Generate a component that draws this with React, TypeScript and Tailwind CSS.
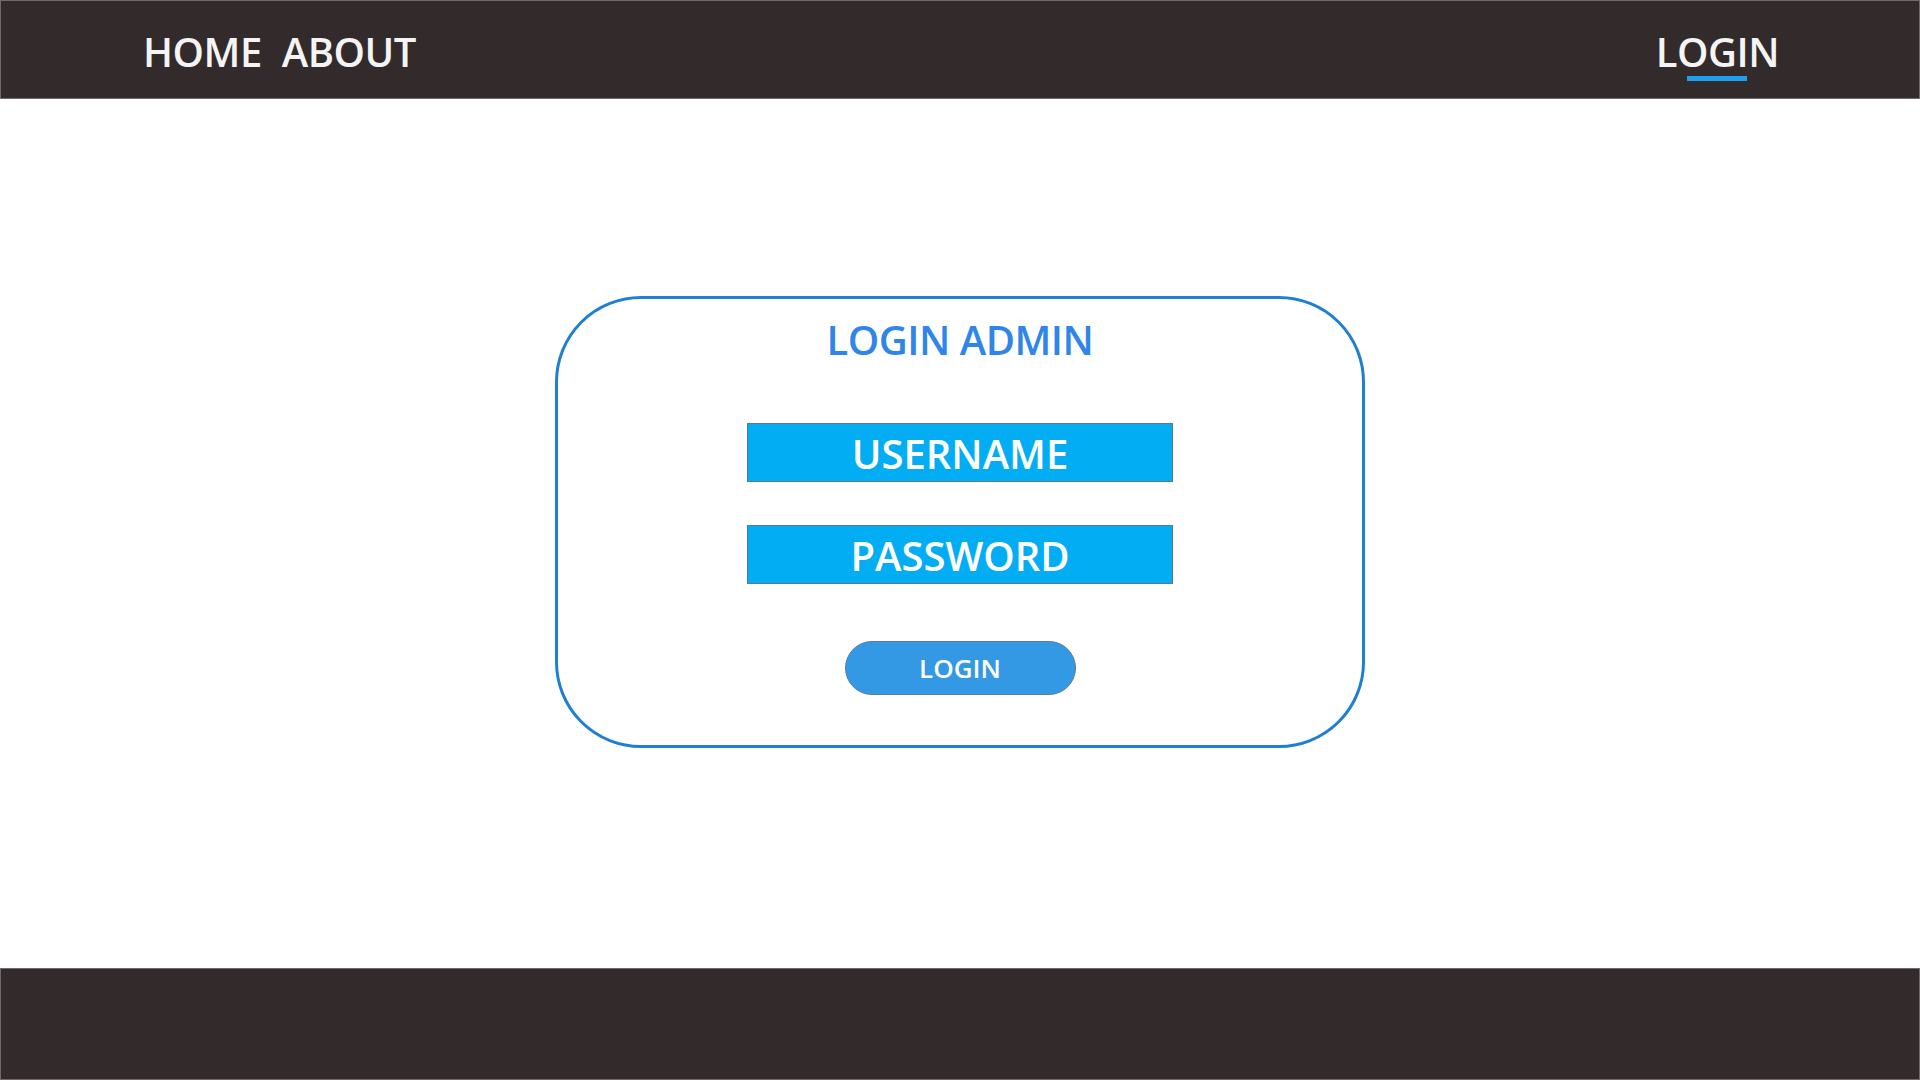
import React from 'react';

const font = { fontFamily: '"Open Sans", "Noto Sans", sans-serif' };

const Field: React.FC<{ label: string }> = ({ label }) => (
  <div className="w-[426px] h-[59px] bg-[#03adf4] border border-[#4f7d9b] flex items-center justify-center pt-[3px]">
    <span className="text-[40px] leading-none font-semibold text-white">{label}</span>
  </div>
);

const App: React.FC = () => {
  return (
    <div className="w-[1920px] h-[1080px] bg-white flex flex-col overflow-hidden" style={font}>
      {/* Top bar */}
      <header className="h-[99px] bg-[#322a2b] border border-[#6b6b6b] flex justify-between items-start pt-[27px] pl-[142px] pr-[140px]">
        <nav className="flex gap-[20px] text-[40px] leading-[48px] font-semibold tracking-[-0.5px] text-[#f4f4f4]">
          <span>HOME</span>
          <span>ABOUT</span>
        </nav>
        <div className="flex flex-col items-center">
          <span className="text-[40px] leading-[48px] font-semibold tracking-[-0.5px] text-[#f4f4f4]">LOGIN</span>
          <div className="w-[60px] h-[5px] bg-[#1ea0ef]" />
        </div>
      </header>

      {/* Login card */}
      <main className="flex-1 pt-[197px]">
        <div className="mx-auto w-[810px] h-[452px] border-[3px] border-[#1f7fd1] rounded-[86px] flex flex-col items-center pt-[17px]">
          <h1 className="text-[40px] leading-[48px] font-semibold tracking-[-0.5px] text-[#2f86e8]">LOGIN ADMIN</h1>
          <div className="mt-[59px] flex flex-col gap-[43px]">
            <Field label="USERNAME" />
            <Field label="PASSWORD" />
          </div>
          <button className="mt-[57px] w-[231px] h-[54px] rounded-full bg-[#3399e5] border border-[#5c7c99] text-white text-[26px] leading-none font-semibold">
            LOGIN
          </button>
        </div>
      </main>

      {/* Bottom bar */}
      <footer className="h-[112px] bg-[#322a2b] border border-[#6b6b6b]" />
    </div>
  );
};

export default App;
